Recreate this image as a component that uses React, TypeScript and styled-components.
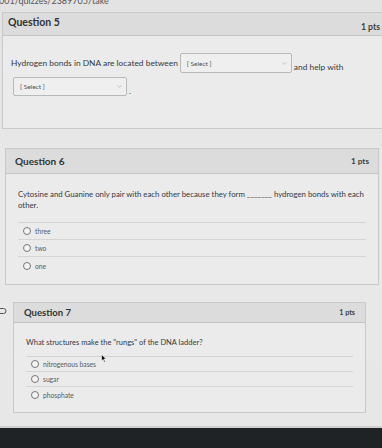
import styled, { createGlobalStyle } from "styled-components";
import { ChevronDown } from "lucide-react";

const GlobalStyle = createGlobalStyle`
  html, body {
    margin: 0;
    padding: 0;
    background: #e6e6e6;
  }
  body {
    font-family: Lato, "Open Sans", sans-serif;
    color: #33393d;
  }
`;

const Page = styled.div`
  position: relative;
  width: 382px;
  height: 448px;
  overflow: hidden;
  display: flex;
  flex-direction: column;
  background: linear-gradient(180deg, #e3e3e3 0%, #e9e9e9 45%, #e7e7e7 100%);
`;

const UrlBar = styled.div`
  height: 7px;
  overflow: hidden;
  font-size: 9px;
  line-height: 9px;
  color: #555;
  white-space: nowrap;
  span {
    display: block;
    margin: -4px 0 0 -3px;
  }
`;

const Stack = styled.div`
  display: flex;
  flex-direction: column;
  flex: 1;
`;

const Card = styled.section<{ $left: number; $width: number; $top: number }>`
  margin-top: ${(p) => p.$top}px;
  margin-left: ${(p) => p.$left}px;
  width: ${(p) => p.$width}px;
  border: 1px solid #c9c9c9;
  background: #ebebeb;
  flex-shrink: 0;
`;

const Header = styled.header<{ $height: number; $padX: number }>`
  height: ${(p) => p.$height}px;
  box-sizing: border-box;
  padding: 3px ${(p) => p.$padX}px;
  display: flex;
  justify-content: space-between;
  align-items: center;
  background: #dcdcdc;
  border-bottom: 1px solid #c4c4c4;
`;

const Title = styled.h2<{ $size: number; $align?: string }>`
  margin: 0;
  font-size: ${(p) => p.$size}px;
  font-weight: 700;
  color: #2f3437;
  align-self: ${(p) => p.$align ?? "center"};
`;

const Points = styled.span<{ $size: number; $align?: string }>`
  font-size: ${(p) => p.$size}px;
  font-weight: 700;
  color: #3a3f42;
  align-self: ${(p) => p.$align ?? "center"};
`;

const Body = styled.div<{ $height: number; $pad: string }>`
  height: ${(p) => p.$height}px;
  box-sizing: border-box;
  padding: ${(p) => p.$pad};
`;

const Row = styled.div<{ $gap?: number }>`
  display: flex;
  align-items: center;
  margin-top: ${(p) => p.$gap ?? 0}px;
`;

const Inline = styled.span<{ $size: number; $drop?: number }>`
  font-size: ${(p) => p.$size}px;
  white-space: nowrap;
  padding-top: ${(p) => p.$drop ?? 0}px;
`;

const SelectBox = styled.div<{ $width: number; $height: number }>`
  width: ${(p) => p.$width}px;
  height: ${(p) => p.$height}px;
  box-sizing: border-box;
  margin: 0 2px;
  padding: 0 3px 0 6px;
  display: flex;
  align-items: center;
  justify-content: space-between;
  border: 1px solid #b9b9b9;
  border-radius: 2px;
  background: #efefef;
  font-size: 6.5px;
  color: #4a4f52;
`;

const Prompt = styled.p<{ $size: number; $width: number }>`
  margin: 0;
  font-size: ${(p) => p.$size}px;
  line-height: 11px;
  width: ${(p) => p.$width}px;
`;

const Options = styled.ul<{ $top: number }>`
  list-style: none;
  margin: ${(p) => p.$top}px 0 0;
  padding: 0;
  border-top: 1px solid #d2d2d2;
`;

const Option = styled.li<{ $height: number; $last?: boolean }>`
  height: ${(p) => p.$height}px;
  box-sizing: border-box;
  display: flex;
  align-items: center;
  gap: 4px;
  padding-left: 5px;
  font-size: 6.7px;
  color: #555b5f;
  border-bottom: ${(p) => (p.$last ? "none" : "1px solid #d5d5d5")};
`;

const Radio = styled.span`
  width: 6px;
  height: 6px;
  border: 1px solid #777;
  border-radius: 50%;
  background: #f4f4f4;
`;

const FlagRow = styled.div`
  display: flex;
  align-items: flex-start;
`;

const Flag = styled.svg`
  flex-shrink: 0;
  margin-top: 22px;
`;

const Cursor = styled.svg`
  position: absolute;
  left: 101px;
  top: 354px;
`;

const Bezel = styled.div`
  margin-top: auto;
  height: 20px;
  background: #1f2325;
  border-top: 2px solid #cfd0d0;
`;

type OptionListProps = { items: string[]; top: number; height: number };

const OptionList = ({ items, top, height }: OptionListProps) => (
  <Options $top={top}>
    {items.map((item, i) => (
      <Option key={item} $height={height} $last={i === items.length - 1}>
        <Radio />
        {item}
      </Option>
    ))}
  </Options>
);

export default function App() {
  return (
    <Page>
      <GlobalStyle />
      <UrlBar>
        <span>.001/quizzes/2389705/take</span>
      </UrlBar>
      <Stack>
        <Card $top={5} $left={2} $width={382}>
          <Header $height={23} $padX={5}>
            <Title $size={10.5} $align="flex-start">
              Question 5
            </Title>
            <Points $size={8.7} $align="flex-end">
              1 pts
            </Points>
          </Header>
          <Body $height={92} $pad="17px 8px 0">
            <Row>
              <Inline $size={8.4}>Hydrogen bonds in DNA are located between</Inline>
              <SelectBox $width={112} $height={20}>
                [ Select ]
                <ChevronDown size={7} strokeWidth={1.5} color="#888" />
              </SelectBox>
              <Inline $size={8.4} $drop={8}>
                and help with
              </Inline>
            </Row>
            <Row $gap={4}>
              <SelectBox $width={114} $height={19}>
                [ Select ]
                <ChevronDown size={7} strokeWidth={1.5} color="#888" />
              </SelectBox>
              <Inline $size={8.4} $drop={8}>
                .
              </Inline>
            </Row>
          </Body>
        </Card>

        <Card $top={19} $left={5} $width={372}>
          <Header $height={25} $padX={9}>
            <Title $size={10}>Question 6</Title>
            <Points $size={8.2}>1 pts</Points>
          </Header>
          <Body $height={110} $pad="15px 12px 0">
            <Prompt $size={7.8} $width={352}>
              {"Cytosine and Guanine only pair with each other because they form _______ hydrogen bonds with each other."}
            </Prompt>
            <OptionList items={["three", "two", "one"]} top={11} height={17} />
          </Body>
        </Card>

        <FlagRow>
          <Flag width="8" height="8" viewBox="0 0 8 8">
            <path
              d="M-2 1.5 H3.5 A2.5 2.5 0 0 1 3.5 6.5 H-2"
              fill="none"
              stroke="#555"
              strokeWidth="1"
            />
          </Flag>
          <Card $top={17} $left={5} $width={351}>
            <Header $height={20} $padX={10}>
              <Title $size={9.5}>Question 7</Title>
              <Points $size={7.2}>1 pts</Points>
            </Header>
            <Body $height={89} $pad="14px 12px 0">
              <Prompt $size={7.5} $width={330}>
                What structures make the "rungs" of the DNA ladder?
              </Prompt>
              <OptionList
                items={["nitrogenous bases", "sugar", "phosphate"]}
                top={8}
                height={15}
              />
            </Body>
          </Card>
        </FlagRow>
        <Bezel />
      </Stack>
      <Cursor width="6" height="9" viewBox="0 0 6 9">
        <path d="M0.5 0.5 L0.5 7 L2 5.5 L3.3 8.3 L4.3 7.8 L3 5 L5.2 5 Z" fill="#111" stroke="#fff" strokeWidth="0.6" />
      </Cursor>
    </Page>
  );
}
